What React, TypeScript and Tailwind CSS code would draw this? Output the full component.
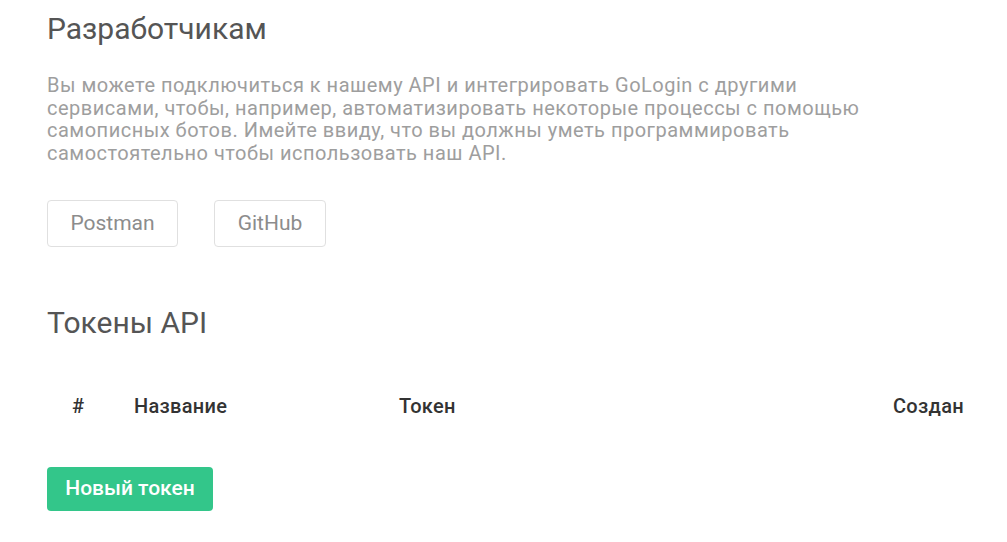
export default function App() {
  const columns = [
    { label: '#', className: 'w-[87px] pl-[25px]' },
    { label: 'Название', className: 'w-[265px]' },
    { label: 'Токен', className: 'flex-1' },
    { label: 'Создан', className: 'pr-[43px]' },
  ];

  return (
    <div
      className="min-h-screen bg-white pl-[47px] pt-[12px]"
      style={{ fontFamily: 'Roboto, "Noto Sans", sans-serif' }}
    >
      <h1 className="text-[30px] leading-[34px] text-[#555555]">Разработчикам</h1>

      <p className="mt-[28px] max-w-[830px] text-[20px] leading-[22.5px] tracking-[0.5px] text-[#9e9e9e]">
        Вы можете подключиться к нашему API и интегрировать GoLogin с другими сервисами, чтобы,
        например, автоматизировать некоторые процессы с помощью самописных ботов. Имейте ввиду, что
        вы должны уметь программировать самостоятельно чтобы использовать наш API.
      </p>

      <div className="mt-[36px] flex gap-[36px]">
        <button className="h-[47px] w-[131px] rounded-[4px] border border-[#e0e0e0] text-[21px] text-[#8c8c8c]">
          Postman
        </button>
        <button className="h-[47px] w-[112px] rounded-[4px] border border-[#e0e0e0] text-[21px] text-[#8c8c8c]">
          GitHub
        </button>
      </div>

      <h2 className="mt-[59px] text-[30px] leading-[34px] text-[#555555]">Токены API</h2>

      <div className="mt-[54px] flex items-center text-[20px] font-medium leading-[24px] tracking-[0.3px] text-[#333333]">
        {columns.map((c) => (
          <div key={c.label} className={c.className}>
            {c.label}
          </div>
        ))}
      </div>

      <button className="mt-[49px] h-[44px] w-[166px] rounded-[4px] bg-[#33c68a] text-[21px] font-medium text-white">
        Новый токен
      </button>
    </div>
  );
}
